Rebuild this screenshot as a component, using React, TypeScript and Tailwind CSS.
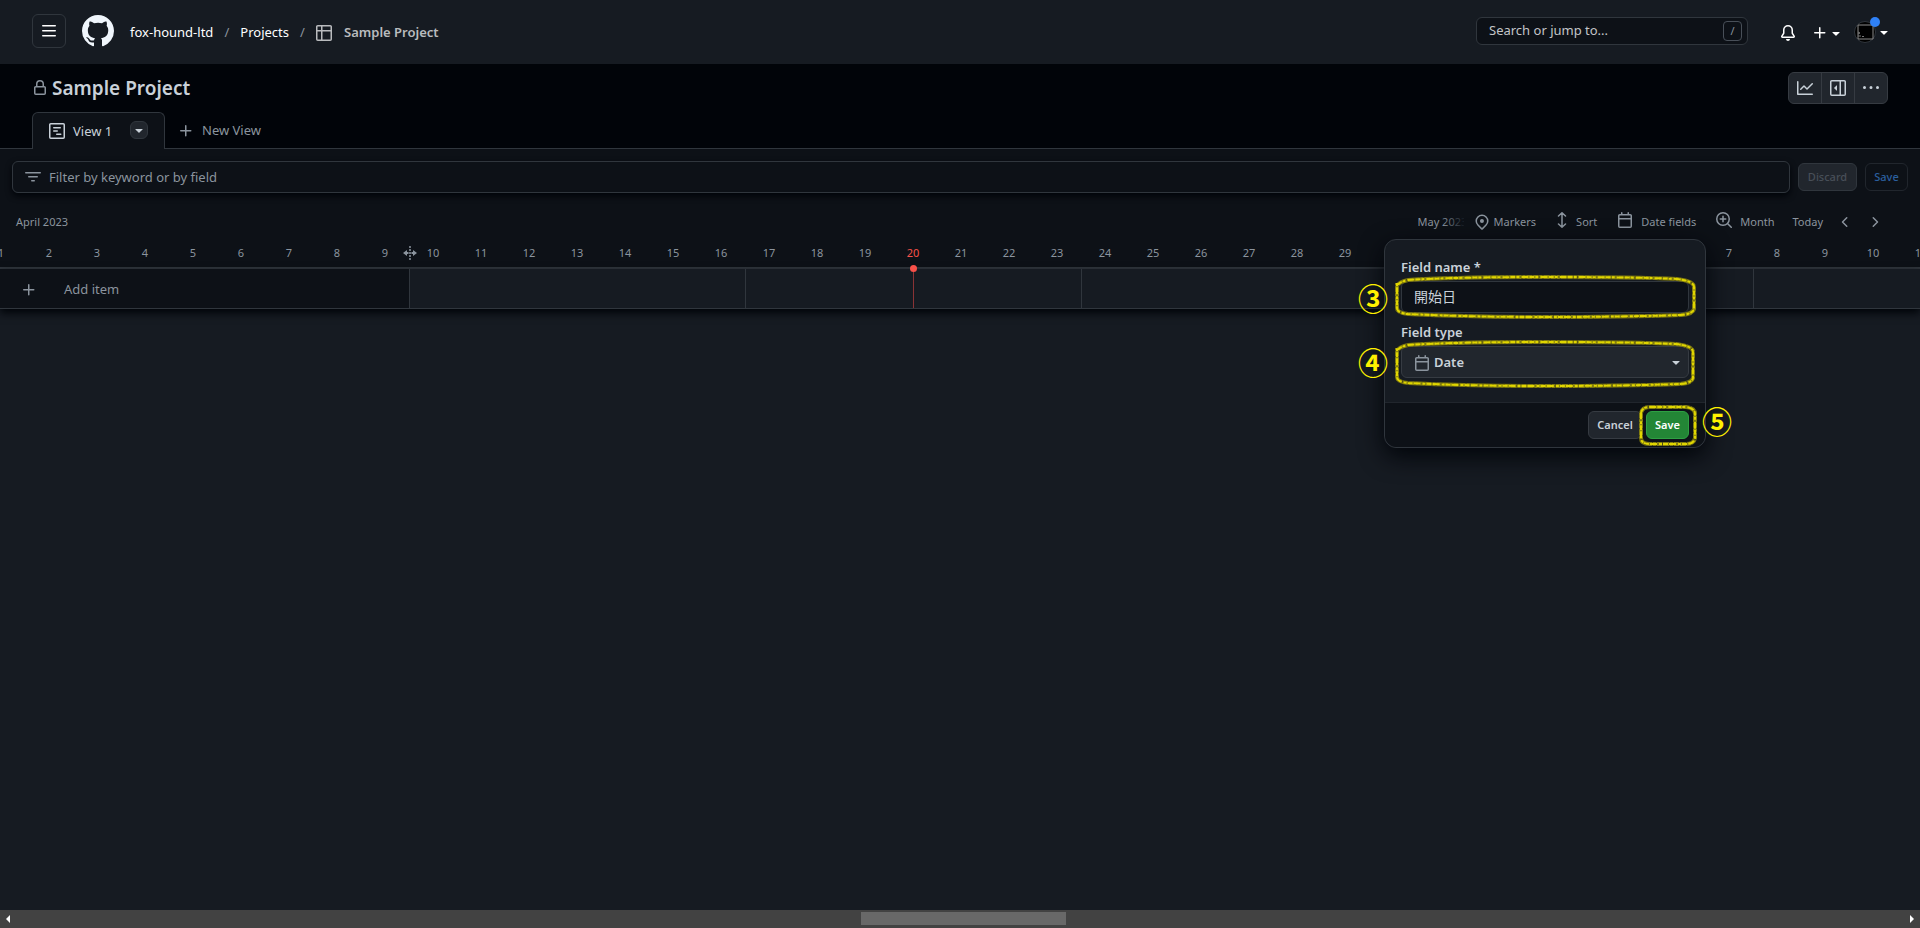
import React from 'react';

interface IIcon {
  paths: string[];
  className?: string;
}

const icons = {
  bars: ['M1 2.75A.75.75 0 0 1 1.75 2h12.5a.75.75 0 0 1 0 1.5H1.75A.75.75 0 0 1 1 2.75Zm0 5A.75.75 0 0 1 1.75 7h12.5a.75.75 0 0 1 0 1.5H1.75A.75.75 0 0 1 1 7.75ZM1.75 12h12.5a.75.75 0 0 1 0 1.5H1.75a.75.75 0 0 1 0-1.5Z'],
  github: ['M8 0c4.42 0 8 3.58 8 8a8.013 8.013 0 0 1-5.45 7.59c-.4.08-.55-.17-.55-.38 0-.27.01-1.13.01-2.2 0-.75-.25-1.23-.54-1.48 1.78-.2 3.65-.88 3.65-3.95 0-.88-.31-1.59-.82-2.15.08-.2.36-1.02-.08-2.12 0 0-.67-.22-2.2.82-.64-.18-1.32-.27-2-.27-.68 0-1.36.09-2 .27-1.53-1.03-2.2-.82-2.2-.82-.44 1.1-.16 1.92-.08 2.12-.51.56-.82 1.28-.82 2.15 0 3.06 1.86 3.75 3.64 3.95-.23.2-.44.55-.51 1.07-.46.21-1.61.55-2.33-.66-.15-.24-.6-.83-1.23-.82-.67.01-.27.38.01.53.34.19.73.9.82 1.13.16.45.68 1.31 2.69.94 0 .67.01 1.3.01 1.49 0 .21-.15.45-.55.38A7.995 7.995 0 0 1 0 8c0-4.42 3.58-8 8-8Z'],
  table: ['M0 1.75C0 .784.784 0 1.75 0h12.5C15.216 0 16 .784 16 1.75v12.5A1.75 1.75 0 0 1 14.25 16H1.75A1.75 1.75 0 0 1 0 14.25ZM6.5 6.5v8h7.75a.25.25 0 0 0 .25-.25V6.5Zm8-1.5V1.75a.25.25 0 0 0-.25-.25H6.5V5Zm-13 1.5v7.75c0 .138.112.25.25.25H5v-8ZM5 5V1.5H1.75a.25.25 0 0 0-.25.25V5Z'],
  bell: ['M8 16a2 2 0 0 0 1.985-1.75c.017-.137-.097-.25-.235-.25h-3.5c-.138 0-.252.113-.235.25A2 2 0 0 0 8 16ZM3 5a5 5 0 0 1 10 0v2.947c0 .05.015.098.042.139l1.703 2.555A1.519 1.519 0 0 1 13.482 13H2.518a1.516 1.516 0 0 1-1.263-2.36l1.703-2.554A.255.255 0 0 0 3 7.947Zm5-3.5A3.5 3.5 0 0 0 4.5 5v2.947c0 .346-.102.683-.294.97l-1.703 2.556a.017.017 0 0 0-.003.01l.001.006c0 .002.002.004.004.006l.006.004.007.001h10.964l.007-.001.006-.004.004-.006.001-.007a.017.017 0 0 0-.003-.01l-1.703-2.554a1.745 1.745 0 0 1-.294-.97V5A3.5 3.5 0 0 0 8 1.5Z'],
  plus: ['M7.75 2a.75.75 0 0 1 .75.75V7h4.25a.75.75 0 0 1 0 1.5H8.5v4.25a.75.75 0 0 1-1.5 0V8.5H2.75a.75.75 0 0 1 0-1.5H7V2.75A.75.75 0 0 1 7.75 2Z'],
  triangle: ['m4.427 7.427 3.396 3.396a.25.25 0 0 0 .354 0l3.396-3.396A.25.25 0 0 0 11.396 7H4.604a.25.25 0 0 0-.177.427Z'],
  lock: ['M4 4a4 4 0 0 1 8 0v2h.25c.966 0 1.75.784 1.75 1.75v5.5A1.75 1.75 0 0 1 12.25 15h-8.5A1.75 1.75 0 0 1 2 13.25v-5.5C2 6.784 2.784 6 3.75 6H4Zm8.25 3.5h-8.5a.25.25 0 0 0-.25.25v5.5c0 .138.112.25.25.25h8.5a.25.25 0 0 0 .25-.25v-5.5a.25.25 0 0 0-.25-.25ZM10.5 6V4a2.5 2.5 0 1 0-5 0v2Z'],
  graph: ['M1.5 1.75V13.5h13.75a.75.75 0 0 1 0 1.5H.75a.75.75 0 0 1-.75-.75V1.75a.75.75 0 0 1 1.5 0Zm14.28 2.53-5.25 5.25a.75.75 0 0 1-1.06 0L7 7.06 4.28 9.78a.751.751 0 0 1-1.042-.018.751.751 0 0 1-.018-1.042l3.25-3.25a.75.75 0 0 1 1.06 0L10 7.94l4.72-4.72a.751.751 0 0 1 1.042.018.751.751 0 0 1 .018 1.042Z'],
  sidebar: [
    'm4.177 7.823 2.396-2.396A.25.25 0 0 1 7 5.604v4.792a.25.25 0 0 1-.427.177L4.177 8.177a.25.25 0 0 1 0-.354Z',
    'M0 1.75C0 .784.784 0 1.75 0h12.5C15.216 0 16 .784 16 1.75v12.5A1.75 1.75 0 0 1 14.25 16H1.75A1.75 1.75 0 0 1 0 14.25Zm1.75-.25a.25.25 0 0 0-.25.25v12.5c0 .138.112.25.25.25H9.5v-13Zm12.5 13a.25.25 0 0 0 .25-.25V1.75a.25.25 0 0 0-.25-.25H11v13Z',
  ],
  kebab: ['M8 9a1.5 1.5 0 1 0 0-3 1.5 1.5 0 0 0 0 3ZM1.5 9a1.5 1.5 0 1 0 0-3 1.5 1.5 0 0 0 0 3Zm13 0a1.5 1.5 0 1 0 0-3 1.5 1.5 0 0 0 0 3Z'],
  filter: ['M.75 3h14.5a.75.75 0 0 1 0 1.5H.75a.75.75 0 0 1 0-1.5ZM3 7.75A.75.75 0 0 1 3.75 7h8.5a.75.75 0 0 1 0 1.5h-8.5A.75.75 0 0 1 3 7.75Zm3 4a.75.75 0 0 1 .75-.75h2.5a.75.75 0 0 1 0 1.5h-2.5a.75.75 0 0 1-.75-.75Z'],
  location: ['m12.596 11.596-3.535 3.536a1.5 1.5 0 0 1-2.122 0l-3.535-3.536a6.5 6.5 0 1 1 9.192-9.193 6.5 6.5 0 0 1 0 9.193Zm-1.06-8.132v-.001a5 5 0 1 0-7.072 7.072L8 14.07l3.536-3.534a5 5 0 0 0 0-7.072ZM8 9a2 2 0 1 1-.001-3.999A2 2 0 0 1 8 9Z'],
  calendar: ['M4.75 0a.75.75 0 0 1 .75.75V2h5V.75a.75.75 0 0 1 1.5 0V2h1.25c.966 0 1.75.784 1.75 1.75v10.5A1.75 1.75 0 0 1 13.25 16H2.75A1.75 1.75 0 0 1 1 14.25V3.75C1 2.784 1.784 2 2.75 2H4V.75A.75.75 0 0 1 4.75 0ZM2.5 7.5v6.75c0 .138.112.25.25.25h10.5a.25.25 0 0 0 .25-.25V7.5Zm10.75-4H2.75a.25.25 0 0 0-.25.25V6h11V3.75a.25.25 0 0 0-.25-.25Z'],
};

const Icon: React.FC<IIcon> = ({ paths, className = 'size-4' }) => (
  <svg viewBox="0 0 16 16" fill="currentColor" aria-hidden="true" className={`shrink-0 ${className}`}>
    {paths.map((d) => (
      <path key={d} d={d} />
    ))}
  </svg>
);

interface IStrokeIcon {
  d: string;
  className?: string;
}

const StrokeIcon: React.FC<IStrokeIcon> = ({ d, className = 'size-4' }) => (
  <svg
    viewBox="0 0 16 16"
    fill="none"
    stroke="currentColor"
    strokeWidth="1.5"
    strokeLinecap="round"
    strokeLinejoin="round"
    aria-hidden="true"
    className={`shrink-0 ${className}`}
  >
    <path d={d} />
  </svg>
);

const roadmap =
  'M1.75.75h12.5a1 1 0 0 1 1 1v12.5a1 1 0 0 1-1 1H1.75a1 1 0 0 1-1-1V1.75a1 1 0 0 1 1-1ZM4.75 4.75h6.5M4.75 8h3.5M7.75 11.25h4';
const sortArrows = 'M8 1v14M4.5 4 8 .75 11.5 4M4.5 12 8 15.25 11.5 12';
const zoomIn = 'M7 .75a6.25 6.25 0 1 1 0 12.5A6.25 6.25 0 0 1 7 .75ZM11.5 11.5l3.75 3.75M7 4.25v5.5M4.25 7h5.5';
const chevronLeft = 'M9.75 3.75 5.5 8l4.25 4.25';
const chevronRight = 'M6.25 3.75 10.5 8l-4.25 4.25';

const Header: React.FC = () => (
  <header className="flex h-16 items-center bg-[#161b22] pr-7 pl-8 text-white">
    <button
      type="button"
      aria-label="Open menu"
      className="-mt-0.5 flex size-[34px] items-center justify-center rounded-md border border-[#30363d]"
    >
      <Icon paths={icons.bars} />
    </button>
    <a href="#home" aria-label="Homepage" className="-mt-0.5 ml-4 text-[#f0f6fc]">
      <Icon paths={icons.github} className="size-8" />
    </a>
    <nav aria-label="Breadcrumb" className="ml-4 flex items-center pt-0.5 text-[13px]">
      <a href="#org">fox-hound-ltd</a>
      <span className="w-[27px] text-center text-[#8b949e]">/</span>
      <a href="#projects">Projects</a>
      <span className="w-[27px] text-center text-[#8b949e]">/</span>
      <a href="#project" className="flex items-center gap-3 font-semibold text-[#b9bbbe]">
        <Icon paths={icons.table} />
        Sample Project
      </a>
    </nav>
    <div className="-mt-0.5 ml-auto flex h-7 w-[272px] items-center rounded-md border border-[#30363d] bg-[#0d1117] pr-[5px] pl-3">
      <input
        aria-label="Search or jump to"
        placeholder="Search or jump to..."
        className="min-w-0 flex-1 text-[13px] placeholder-[#c3c5c8] outline-none"
      />
      <kbd className="flex h-5 w-[19px] items-center justify-center rounded-sm border border-[#484f58] font-[inherit] text-[11px] text-[#8b949e]">
        /
      </kbd>
    </div>
    <button type="button" aria-label="Notifications" className="ml-8 pt-0.5">
      <Icon paths={icons.bell} />
    </button>
    <button type="button" aria-label="Create new" className="ml-4 flex items-center pt-0.5">
      <Icon paths={icons.plus} />
      <Icon paths={icons.triangle} />
    </button>
    <button type="button" aria-label="Account" className="ml-2.5 flex items-center">
      <span className="relative">
        <svg viewBox="0 0 22 22" aria-hidden="true" className="size-[22px]">
          <circle cx="11" cy="11" r="10.5" fill="#000" stroke="#30363d" />
          <path d="M4 18V4h15v14Z" fill="#000" stroke="#8b8b8b" />
          <path d="M4 11l2 1-2 1M4 15h3M8 15.500h2" fill="none" stroke="#777" />
        </svg>
        <span className="absolute -top-1 -right-1 size-2.5 rounded-full bg-[#2f81f7]" />
      </span>
      <Icon paths={icons.triangle} />
    </button>
  </header>
);

const ProjectBar: React.FC = () => (
  <div className="flex flex-col bg-[#010409]">
    <div className="flex h-12 items-start justify-between px-8 pt-2">
      <h1 className="flex items-center gap-1 text-[19px] leading-8 font-semibold text-[#c9d1d9]">
        <span className="text-[#8b949e]">
          <Icon paths={icons.lock} />
        </span>
        Sample Project
      </h1>
      <div className="flex h-8 w-[100px] divide-x divide-[#363b42] rounded-md border border-[#363b42] bg-[#21262d] text-[#c9d1d9]">
        <button type="button" aria-label="Insights" className="flex flex-1 items-center justify-center">
          <Icon paths={icons.graph} />
        </button>
        <button type="button" aria-label="Project details" className="flex flex-1 items-center justify-center">
          <Icon paths={icons.sidebar} />
        </button>
        <button type="button" aria-label="More options" className="flex flex-1 items-center justify-center">
          <Icon paths={icons.kebab} />
        </button>
      </div>
    </div>
    <div className="flex text-[13px]">
      <div className="w-8 border-b border-[#30363d]" />
      <div className="flex h-[37px] w-[133px] items-center rounded-t-md border border-b-0 border-[#30363d] bg-[#0d1117] px-4 text-[#c9d1d9]">
        <StrokeIcon d={roadmap} />
        <a href="#view-1" className="ml-2 pt-0.5">View 1</a>
        <button
          type="button"
          aria-label="View options"
          className="mb-0.5 ml-auto flex size-[18px] items-center justify-center rounded-md border border-[#30363d] bg-[#21262d]"
        >
          <Icon paths={icons.triangle} />
        </button>
      </div>
      <div className="flex flex-1 items-center border-b border-[#30363d] pt-0.5 pl-[13px] text-[#8b949e]">
        <button type="button" className="flex items-center gap-2">
          <Icon paths={icons.plus} />
          New View
        </button>
      </div>
    </div>
  </div>
);

const FilterBar: React.FC = () => (
  <div className="flex items-center gap-2 px-3 pt-3">
    <div className="flex h-8 flex-1 items-center gap-2 rounded-md border border-[#30363d] px-3 text-[#8b949e] shadow-[0_3px_6px_#010409]">
      <Icon paths={icons.filter} />
      <input
        aria-label="Filter by keyword or by field"
        placeholder="Filter by keyword or by field"
        className="min-w-0 flex-1 pt-0.5 text-[13px] placeholder-[#8b949e] outline-none"
      />
    </div>
    <button type="button" className="h-7 w-[59px] rounded-md border border-[#30363d] bg-[#21262d] text-[11px] font-medium text-[#484f58]">
      Discard
    </button>
    <button type="button" className="h-7 w-[43px] rounded-md border border-[#21262d] text-[11px] font-medium text-[#2b5f9e]">
      Save
    </button>
  </div>
);

const days = [...Array.from({ length: 30 }, (_, i) => i + 1), ...Array.from({ length: 11 }, (_, i) => i + 1)];
const TODAY = 19;

interface IRing {
  width: number;
  height: number;
  bulge: number;
}

// Hand-drawn marker ring
const Ring: React.FC<IRing> = ({ width: w, height: h, bulge: b }) => {
  const d = `M4 ${b + 5} Q5 ${b + 2} 14 ${b} Q60 3 ${w / 2} 3 T${w - 20} ${b - 1} Q${w - 3} ${b + 1} ${w - 3} ${b + 7} V${h - b - 5} Q${w - 4} ${h - b} ${w - 16} ${h - b + 1} Q${w * 0.75} ${h - 3} ${w / 2} ${h - 3} T14 ${h - b} Q3 ${h - b - 1} 3 ${h - b - 6} V${b + 3}`;
  return (
    <svg viewBox={`0 0 ${w} ${h}`} width={w} height={h} fill="none" aria-hidden="true">
      <path d={d} stroke="#837d10" strokeWidth="4" />
      <path d={d} stroke="#4f4c12" strokeWidth="4" strokeDasharray="1 5 1 3 1 6" />
      <path d={d} stroke="#e0d600" strokeWidth="2" strokeDasharray="5 1 3 2 7 1" />
    </svg>
  );
};

const FieldDialog: React.FC = () => (
  <div
    role="dialog"
    aria-label="New field"
    className="absolute top-[90px] right-[214px] z-10 w-[322px] rounded-xl border border-[#30363d] bg-[#161b22] text-[#c9d1d9] shadow-[0_8px_24px_#010409]"
  >
    <div className="flex flex-col px-4 pt-4 pb-6 text-[13px] font-semibold">
      <label htmlFor="field-name" className="mb-[3px] leading-[22px]">Field name *</label>
      <input
        id="field-name"
        defaultValue="開始日"
        className="h-8 rounded-md border border-[#30363d] bg-[#0d1117] px-3 pb-0.5 text-sm font-normal outline-none"
      />
      <label htmlFor="field-type" className="mt-2 mb-[3px] leading-[22px]">Field type</label>
      <div className="relative flex">
        <select
          id="field-type"
          className="h-8 flex-1 appearance-none rounded-md border border-[#363b42] bg-[#21262d] pt-0.5 pl-8 outline-none"
        >
          <option>Date</option>
        </select>
        <span className="pointer-events-none absolute top-[9px] left-[13px] text-[#8b949e]">
          <Icon paths={icons.calendar} />
        </span>
        <span className="pointer-events-none absolute top-2 right-[5px]">
          <Icon paths={icons.triangle} />
        </span>
      </div>
    </div>
    <div className="flex justify-end gap-1 rounded-b-xl border-t border-[#21262d] bg-[#0d1117] px-4 py-2 text-[11px] font-semibold">
      <button type="button" className="h-7 w-[54px] rounded-md border border-[#363b42] bg-[#21262d]">
        Cancel
      </button>
      <button type="button" className="h-7 w-[43px] rounded-md border border-[#2ea043] bg-[#238636] text-white">
        Save
      </button>
    </div>
    <div className="pointer-events-none absolute top-[34px] left-[9px]">
      <Ring width={303} height={46} bulge={6} />
    </div>
    <div className="pointer-events-none absolute top-[99px] left-[9px]">
      <Ring width={302} height={50} bulge={6} />
    </div>
    <svg viewBox="0 0 60 43" fill="none" aria-hidden="true" className="pointer-events-none absolute top-[164px] right-[7px] h-[43px] w-[60px]">
      <path d="M3 9Q4 3 12 3H48Q57 4 57 10V34Q56 40 48 40H12Q3 40 3 34Z" stroke="#837d10" strokeWidth="4" />
      <path d="M3 9Q4 3 12 3H48Q57 4 57 10V34Q56 40 48 40H12Q3 40 3 34Z" stroke="#4f4c12" strokeWidth="4" strokeDasharray="1 5 1 3 1 6" />
      <path d="M3 9Q4 3 12 3H48Q57 4 57 10V34Q56 40 48 40H12Q3 40 3 34Z" stroke="#e0d600" strokeWidth="2" strokeDasharray="5 1 3 2 7 1" />
    </svg>
    <span className="absolute top-[41px] -left-[27px] text-[30px] leading-9 font-bold text-[#fff100]">③</span>
    <span className="absolute top-[105px] -left-[27px] text-[30px] leading-9 font-bold text-[#fff100]">④</span>
    <span className="absolute top-[164px] -right-[27px] text-[30px] leading-9 font-bold text-[#fff100]">⑤</span>
  </div>
);

const Roadmap: React.FC = () => (
  <main className="relative flex flex-1 flex-col bg-[#0d1117] text-[11px] text-[#8b949e]">
    <FilterBar />
    <div className="flex h-[52px] items-center justify-between pt-1.5 pr-[37px] pl-4">
      <h2>April 2023</h2>
      <div className="flex items-center">
        <span className="relative w-14 overflow-hidden whitespace-nowrap">
          <span className="block w-[46px] overflow-hidden">May 2023</span>
          <span className="absolute inset-y-0 left-6 w-6 bg-linear-to-r from-transparent to-[#0d1117]" />
        </span>
        <button type="button" className="flex items-center gap-1">
          <Icon paths={icons.location} />
          Markers
        </button>
        <button type="button" className="ml-[18px] flex items-center gap-1.5">
          <StrokeIcon d={sortArrows} className="mb-1 size-4" />
          Sort
        </button>
        <button type="button" className="ml-5 flex items-center gap-2">
          <Icon paths={icons.calendar} className="mb-1 size-4" />
          Date fields
        </button>
        <button type="button" className="ml-5 flex items-center gap-2">
          <StrokeIcon d={zoomIn} className="mb-1 size-4" />
          Month
        </button>
        <button type="button" className="ml-[18px]">Today</button>
        <button type="button" aria-label="Previous" className="ml-3.5">
          <StrokeIcon d={chevronLeft} />
        </button>
        <button type="button" aria-label="Next" className="ml-3.5">
          <StrokeIcon d={chevronRight} />
        </button>
      </div>
    </div>
    <div className="relative overflow-hidden border-b-2 border-[#30363d]">
      <div className="-ml-[23px] flex h-4">
        {days.map((day, i) => (
          <span key={i} className={`w-12 shrink-0 text-center leading-4 ${i === TODAY ? 'text-[#f85149]' : ''}`}>
            {day}
          </span>
        ))}
      </div>
      <div className="h-1.5" />
      <svg viewBox="0 0 16 16" fill="currentColor" aria-hidden="true" className="absolute top-0 left-[402px] size-4">
        <path d="M5 5v2h1.500v2H5v2L1 8ZM11 5v2H9.500v2H11v2l4-3Z" />
        <path d="M7.250 1h1.500v2h-1.500ZM7.250 4h1.500v2h-1.500ZM7.250 7h1.500v2h-1.500ZM7.250 10h1.500v2h-1.500ZM7.250 13h1.500v2h-1.500Z" />
      </svg>
    </div>
    <div className="relative z-1 flex h-10 border-b border-[#30363d] text-[13px] shadow-[0_4px_8px_#010409]">
      <button type="button" className="flex w-[409px] shrink-0 items-center gap-[27px] bg-[#0d1117] pt-0.5 pl-[21px]">
        <Icon paths={icons.plus} />
        Add item
      </button>
      <div className="flex min-w-0 flex-1 overflow-hidden bg-[#161b22]">
        {[0, 1, 2, 3, 4].map((week) => (
          <div key={week} className="w-[336px] shrink-0 border-l border-[#30363d]" />
        ))}
      </div>
      <div className="absolute -top-1 left-[910px] flex w-[7px] flex-col items-center">
        <span className="size-[7px] rounded-full bg-[#f85149]" />
        <span className="h-9 w-px bg-[#8a3335]" />
      </div>
    </div>
    <div className="flex-1 bg-[#161b22]" />
    <FieldDialog />
  </main>
);

const Scrollbar: React.FC = () => (
  <div className="flex h-[18px] items-center justify-between bg-[#424242] px-1.5 pb-px text-white">
    <svg viewBox="0 0 4 8" fill="currentColor" aria-hidden="true" className="h-2 w-1">
      <path d="M4 0v8L0 4Z" />
    </svg>
    <div className="ml-1.5 h-[13px] w-[205px] bg-[#686868]" />
    <svg viewBox="0 0 4 8" fill="currentColor" aria-hidden="true" className="h-2 w-1">
      <path d="M0 0v8l4-4Z" />
    </svg>
  </div>
);

const App: React.FC = () => {
  return (
    <div className="flex min-h-screen flex-col font-['Noto_Sans','Noto_Sans_CJK_JP',sans-serif]">
      <Header />
      <ProjectBar />
      <Roadmap />
      <Scrollbar />
    </div>
  );
};

export default App;
